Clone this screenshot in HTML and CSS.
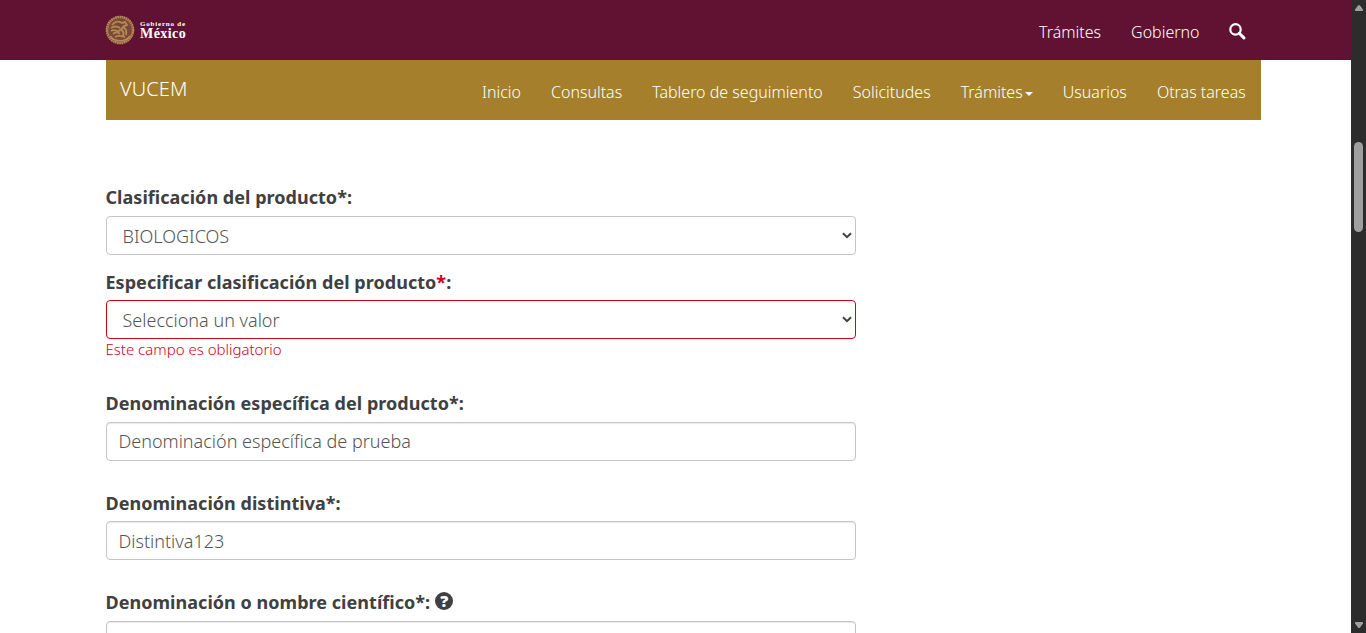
FILE: index.html
```html
<!DOCTYPE html>
<html lang="es">
<head>
<meta charset="utf-8">
<title>VUCEM</title>
<link rel="stylesheet" href="styles.css">
</head>
<body>
<div class="page">
  <header class="gov-bar">
    <div class="container gov-inner">
      <a class="logo">
        <svg class="seal" viewBox="0 0 30 30" width="30" height="30" fill="none" stroke="#b08a52">
          <circle cx="15" cy="15" r="12" fill="#7c4638" stroke="none"/>
          <circle cx="15" cy="15" r="13" stroke-width="2.6" stroke-dasharray="1.8 .35"/>
          <path d="M7 10c3-4 7-4 10-2l3-1 2 3-3 1c-1 3-4 3-5 5M6 13c3-2 6-2 9 0M6 16c3-2 5-1 8 1M8 19c2-2 5-2 7 0M17 12c4 1 5 4 4 8M16 15c3 1 3 3 2 6M10 22c3-2 7-1 10 0M5 21c4 6 15 7 20 0" stroke-width="1.9"/>
        </svg>
        <span class="wordmark"><span class="word-top">Gobierno de</span><span class="word-main">México</span></span>
      </a>
      <nav class="gov-nav">
        <a>Trámites</a>
        <a>Gobierno</a>
        <svg class="search" viewBox="0 0 17 17" width="17" height="17" fill="none" stroke="#fff"><circle cx="6.5" cy="6.400" r="5.2" stroke-width="2.200"/><path d="M10.300 10.300l4.600 4.600" stroke-width="3" stroke-linecap="round"/></svg>
      </nav>
    </div>
  </header>
  <div class="container app-bar">
    <a class="brand">VUCEM</a>
    <nav class="app-nav">
      <a>Inicio</a><a>Consultas</a><a>Tablero de seguimiento</a><a>Solicitudes</a><a>Trámites<i class="caret"></i></a><a>Usuarios</a><a>Otras tareas</a>
    </nav>
  </div>
  <main class="container form">
    <div class="field field-class">
      <label>Clasificación del producto*:</label>
      <div class="control select"><span>BIOLOGICOS</span><svg viewBox="0 0 10 7" width="10" height="7"><path d="M1 1.200l4 4 4-4" fill="none" stroke="#414141" stroke-width="2"/></svg></div>
    </div>
    <div class="field field-error">
      <label>Especificar clasificación del producto<span class="required">*</span>:</label>
      <div class="control select invalid"><span>Selecciona un valor</span><svg viewBox="0 0 10 7" width="10" height="7"><path d="M1 1.200l4 4 4-4" fill="none" stroke="#414141" stroke-width="2"/></svg></div>
      <small class="error">Este campo es obligatorio</small>
    </div>
    <div class="field field-specific">
      <label>Denominación específica del producto*:</label>
      <div class="control input">Denominación específica de prueba</div>
    </div>
    <div class="field field-brand">
      <label>Denominación distintiva*:</label>
      <div class="control input">Distintiva123</div>
    </div>
    <div class="field">
      <label>Denominación o nombre científico*:<span class="help">?</span></label>
      <div class="control input"></div>
    </div>
  </main>
</div>
<aside class="scrollbar">
  <svg viewBox="0 0 10 8" width="10" height="8"><path d="M4 1.500q1-1.200 2 0l3 4q.5 1.500-1 1.500H2Q.5 7 1 5.500z" fill="#9f9f9f"/></svg>
  <div class="thumb"></div>
  <svg class="down" viewBox="0 0 10 8" width="10" height="8"><path d="M4 6.500q1 1.200 2 0l3-4Q9.500 1 8 1H2Q.5 1 1 2.500z" fill="#9f9f9f"/></svg>
</aside>
</body>
</html>
```
FILE: styles.css
```css
* { box-sizing: border-box; }
body {
  margin: 0;
  display: flex;
  height: 633px;
  overflow: hidden;
  background: #fff;
  color: #404041;
  font: 300 18px/26px "Noto Sans", sans-serif;
}
.page { width: 1351px; height: 633px; overflow: hidden; }
.container { width: 1155px; margin-left: 106px; }
.gov-bar { height: 60px; background: #611232; }
.gov-inner { display: flex; justify-content: space-between; height: 60px; }
.logo { display: flex; align-items: center; gap: 5px; height: 59px; margin-left: -1px; }
.wordmark {
  display: flex;
  flex-direction: column;
  color: #fff;
  font-family: "Liberation Serif", serif;
  font-weight: 700;
}
.word-top { font-size: 7px; line-height: 8px; letter-spacing: .8px; }
.word-main { font-size: 14px; line-height: 12px; letter-spacing: .45px; }
.gov-nav { display: flex; gap: 30px; padding: 19px 15px 0 0; color: #fff; font-size: 16px; }
.search { margin: 4px 0 0 -.5px; }
.app-bar {
  display: flex;
  justify-content: space-between;
  height: 60px;
  padding: 0 15.25px 0 14px;
  background: #a57f2c;
  color: #fff;
}
.brand { padding-top: 16px; font-size: 20px; letter-spacing: .1px; }
.app-nav { display: flex; gap: 30px; padding-top: 19px; font-size: 16px; }
.caret {
  display: inline-block;
  margin-left: 2px;
  vertical-align: middle;
  border: 4px solid transparent;
  border-top-color: #fff;
  border-bottom: 0;
}
.form { padding-top: 64px; }
.field { width: 750px; }
.field-class { height: 85px; }
.field-error { height: 121px; }
.field-specific { height: 100px; }
.field-brand { height: 99px; }
label {
  display: flex;
  align-items: center;
  height: 26px;
  margin-left: -.5px;
  font-weight: 700;
  letter-spacing: .035px;
  white-space: nowrap;
}
.required { color: #d0021b; }
.control {
  display: flex;
  align-items: center;
  height: 39px;
  margin-top: 6px;
  padding-left: 11.5px;
  border: 1px solid #c5c5c5;
  border-radius: 4px;
  color: #545454;
}
.input { padding-bottom: 1px; box-shadow: inset 0 1px 1px rgba(0, 0, 0, .09); }
.select { justify-content: space-between; padding: 1px 3px 0 15.5px; }
.select svg { margin-bottom: 2px; }
.field-error .control { margin-top: 5px; }
.field-brand .control { margin-top: 5px; padding-bottom: 0; }
.invalid { border-color: #d0021b; }
.error {
  display: block;
  height: 20px;
  margin-left: -.5px;
  color: #d0021b;
  font-size: 15px;
  line-height: 21px;
}
.help {
  width: 18px;
  height: 18px;
  margin: -2px 0 0 5px;
  border-radius: 50%;
  background: #404041;
  color: #fff;
  font-size: 16px;
  font-weight: 900;
  line-height: 18px;
  text-align: center;
}
.scrollbar {
  display: flex;
  flex-direction: column;
  align-items: center;
  width: 15px;
  height: 633px;
  padding: 4px 0 4px;
  background: #2c2c2c;
}
.thumb { width: 9px; height: 90px; margin-top: 130px; border-radius: 5px; background: #9f9f9f; }
.down { margin-top: auto; }
```
